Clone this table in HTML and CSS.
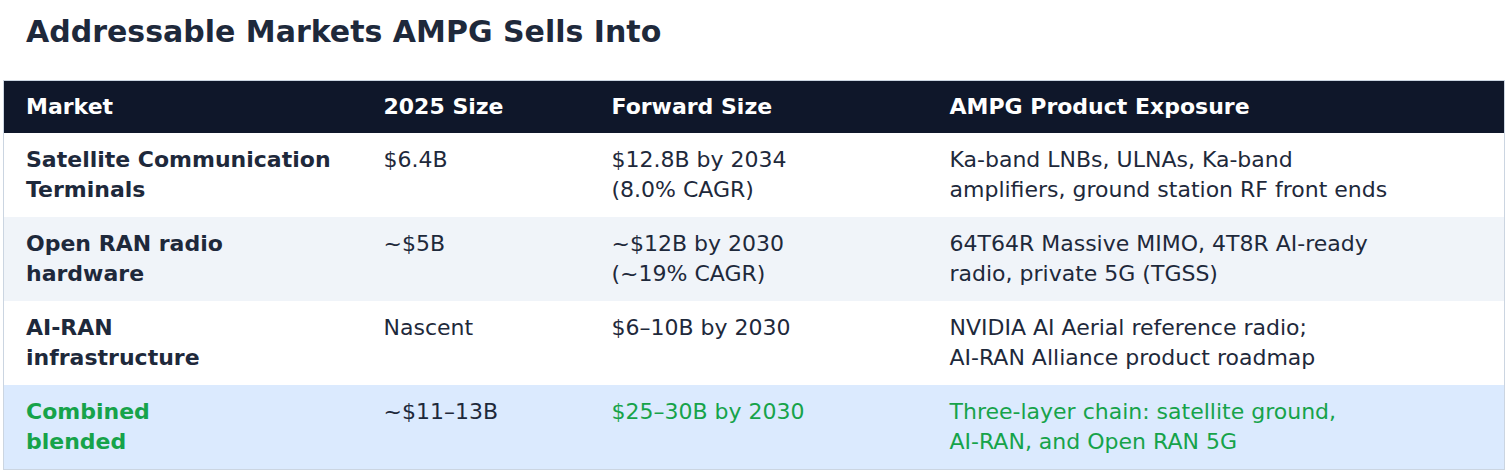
FILE: index.html
```html
<!DOCTYPE html>
<html lang="en">
<head>
<meta charset="utf-8">
<title>Addressable Markets AMPG Sells Into</title>
<link rel="stylesheet" href="styles.css">
</head>
<body>
<main class="page">
  <h1 class="title">Addressable Markets AMPG Sells Into</h1>
  <table class="markets">
    <colgroup>
      <col class="c-market">
      <col class="c-size">
      <col class="c-forward">
      <col class="c-exposure">
    </colgroup>
    <thead>
      <tr>
        <th>Market</th>
        <th>2025 Size</th>
        <th>Forward Size</th>
        <th>AMPG Product Exposure</th>
      </tr>
    </thead>
    <tbody>
      <tr>
        <td class="name">Satellite Communication<br>Terminals</td>
        <td>$6.4B</td>
        <td>$12.8B by 2034<br>(8.0% CAGR)</td>
        <td>Ka-band LNBs, ULNAs, Ka-band<br>amplifiers, ground station RF front ends</td>
      </tr>
      <tr class="alt">
        <td class="name">Open RAN radio<br>hardware</td>
        <td>~$5B</td>
        <td>~$12B by 2030<br>(~19% CAGR)</td>
        <td>64T64R Massive MIMO, 4T8R AI-ready<br>radio, private 5G (TGSS)</td>
      </tr>
      <tr>
        <td class="name">AI-RAN<br>infrastructure</td>
        <td>Nascent</td>
        <td>$6–10B by 2030</td>
        <td>NVIDIA AI Aerial reference radio;<br>AI-RAN Alliance product roadmap</td>
      </tr>
      <tr class="total">
        <td class="name green">Combined<br>blended</td>
        <td>~$11–13B</td>
        <td class="green">$25–30B by 2030</td>
        <td class="green">Three-layer chain: satellite ground,<br>AI-RAN, and Open RAN 5G</td>
      </tr>
    </tbody>
  </table>
</main>
</body>
</html>
```

FILE: styles.css
```css
html, body {
  margin: 0;
  padding: 0;
  background: #ffffff;
}

body {
  font-family: "DejaVu Sans", Verdana, sans-serif;
  color: #1e293b;
}

.page {
  padding: 0 1px 0 3px;
}

.title {
  margin: 0;
  padding: 12px 0 0 23px;
  height: 80px;
  box-sizing: border-box;
  font-size: 30px;
  line-height: 40px;
  font-weight: 700;
  color: #1e293b;
}

.markets {
  width: 1502px;
  border-collapse: collapse;
  table-layout: fixed;
  border: 1px solid #cbd5e1;
  font-size: 22px;
  line-height: 30px;
}

.c-market { width: 358px; }
.c-size { width: 228px; }
.c-forward { width: 338px; }
.c-exposure { width: auto; }

.markets th {
  background: #0f172a;
  color: #ffffff;
  font-weight: 700;
  text-align: left;
  padding: 11px 22px;
}

.markets td {
  vertical-align: top;
  padding: 12px 22px;
  color: #1e293b;
}

.markets td.name {
  font-weight: 700;
}

.markets tr.alt td {
  background: #f0f4f9;
}

.markets tr.total td {
  background: #dbeafe;
}

.markets td.green {
  color: #16a34a;
}
```
